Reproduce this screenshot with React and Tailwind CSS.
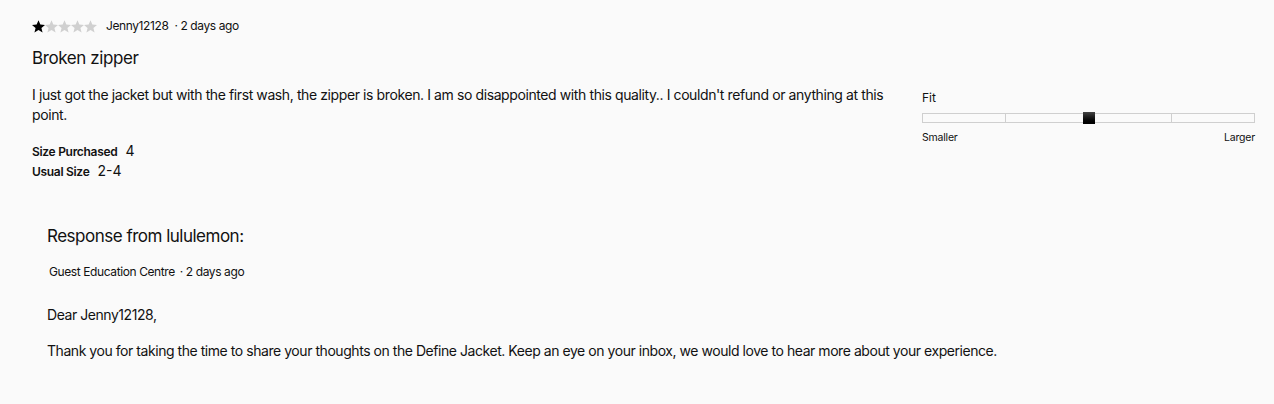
import React from "react";

function Star({ filled }) {
  return (
    <svg width="13" height="13" viewBox="0 0 24 24" className="block">
      <path
        d="M12 0.5l3.4 7.9 8.6.7-6.6 5.6 2.1 8.4L12 18.6l-7.5 4.5 2.1-8.4L0 9.1l8.6-.7z"
        fill={filled ? "#000" : "#d0d0d0"}
      />
    </svg>
  );
}

export default function App() {
  return (
    <div
      className="w-[1274px] h-[404px] bg-[#fafafa] text-[#111] overflow-hidden"
      style={{ fontFamily: "Inter, 'Liberation Sans', sans-serif" }}
    >
      <div className="flex pl-[32px] pr-[19px] pt-[18px]">
        <div className="w-[860px] flex flex-col">
          <div className="flex items-center h-[16px]">
            <div className="flex">
              {[1, 0, 0, 0, 0].map((f, i) => (
                <Star key={i} filled={f} />
              ))}
            </div>
            <span className="ml-[9px] text-[12px] tracking-[-0.4px]">Jenny12128</span>
            <span className="ml-[6px] text-[12px] tracking-[-0.4px]">· 2 days ago</span>
          </div>
          <h2 className="mt-[13px] text-[17px] leading-[22px] tracking-[-0.4px]">Broken zipper</h2>
          <p className="mt-[16px] text-[14px] leading-[20px] tracking-[-0.4px]">
            I just got the jacket but with the first wash, the zipper is broken. I am so disappointed with this quality.. I couldn't refund or anything at this point.
          </p>
          <div className="mt-[15px] flex items-baseline h-[20px]">
            <span className="text-[12px] font-semibold tracking-[-0.3px]">Size Purchased</span>
            <span className="ml-[8px] text-[14px]">4</span>
          </div>
          <div className="flex items-baseline h-[20px]">
            <span className="text-[12px] font-semibold tracking-[-0.3px]">Usual Size</span>
            <span className="ml-[8px] text-[14px]">2-4</span>
          </div>
        </div>
        <div className="ml-auto w-[333px] pt-[72px]">
          <div className="text-[12px] leading-[16px]">Fit</div>
          <div className="relative mt-[7px] h-[10px] border border-[#cfcfcf] flex">
            <div className="flex-1 border-r border-[#cfcfcf]" />
            <div className="flex-1 border-r border-[#cfcfcf]" />
            <div className="flex-1 border-r border-[#cfcfcf]" />
            <div className="flex-1" />
            <div className="absolute left-[160px] top-[-2px] w-[12px] h-[12px] bg-gradient-to-b from-[#444] to-[#000]" />
          </div>
          <div className="mt-[8px] flex justify-between text-[10.5px] leading-[14px] tracking-[-0.2px]">
            <span>Smaller</span>
            <span>Larger</span>
          </div>
        </div>
      </div>
      <div className="pl-[47px] mt-[45px]">
        <h3 className="text-[17px] leading-[22px] tracking-[-0.5px]">Response from lululemon:</h3>
        <div className="mt-[16px] pl-[2px] text-[12px] tracking-[-0.4px]">
          Guest Education Centre <span className="ml-[2px]">· 2 days ago</span>
        </div>
        <p className="mt-[24px] text-[14px] leading-[20px] tracking-[-0.45px]">Dear Jenny12128,</p>
        <p className="mt-[16px] text-[14px] leading-[20px] tracking-[-0.45px]">
          Thank you for taking the time to share your thoughts on the Define Jacket. Keep an eye on your inbox, we would love to hear more about your experience.
        </p>
      </div>
    </div>
  );
}
